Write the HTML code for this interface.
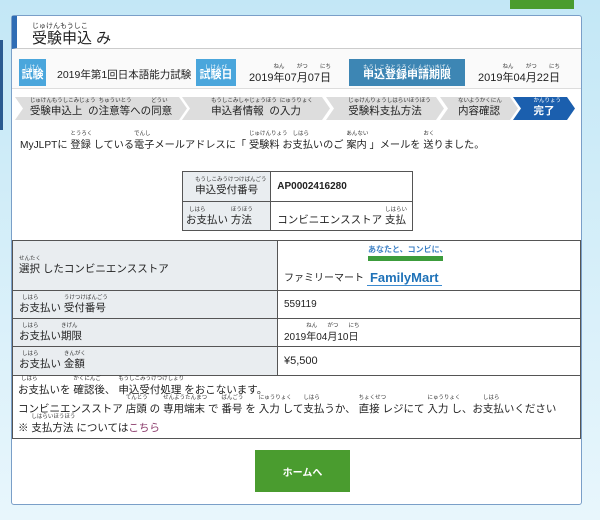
<!DOCTYPE html>
<html><head><meta charset="utf-8"><style>
*{margin:0;padding:0;box-sizing:border-box}
body{width:600px;height:520px;overflow:hidden;background:linear-gradient(#c3e7f6,#e8f6fc);font-family:"Liberation Sans","Noto Sans CJK JP",sans-serif;color:#222;position:relative}
.a{position:absolute;white-space:nowrap}
.r{position:relative;display:inline-block}
.r i{position:absolute;bottom:88%;left:0;font-size:5.5px;font-style:normal;white-space:nowrap;line-height:1;color:#333;font-weight:normal}
.card{left:11px;top:15px;width:571px;height:490px;background:#fff;border:1px solid #7a9fc8;border-radius:3px}
.lbl{color:#fff;font-size:11px;font-weight:bold;line-height:1;display:flex;align-items:flex-end;justify-content:center;padding-bottom:5px}
.lbl .r i{color:#fff;left:50%;transform:translateX(-50%)}
table{border-collapse:collapse;position:absolute;font-size:10px}
td{border:1.5px solid #555;padding:0 6px;vertical-align:middle;white-space:nowrap}
td.g{background:#e9edf0}
.step{position:absolute;top:97px;height:23px;background:#ddd;font-size:10.5px;display:flex;align-items:flex-end;justify-content:center;padding-bottom:2px;white-space:nowrap;clip-path:polygon(0 0,calc(100% - 8px) 0,100% 50%,calc(100% - 8px) 100%,0 100%,8px 50%)}
</style></head><body>
<div class="a" style="left:0;top:40px;width:3px;height:90px;background:#2a5a90"></div>
<div class="a" style="left:510px;top:0;width:64px;height:9px;background:#4a9c2f"></div>
<div class="a card"></div>
<div class="a" style="left:12px;top:16px;width:569px;height:33px;border-left:5px solid #2f6db5;border-bottom:1px solid #ccc"></div>
<div class="a" style="left:32px;top:27px;font-size:15px"><span class="r">受験申込<i style="font-size:7px">じゅけんもうしこ</i></span> み</div>
<div class="a" style="left:12px;top:49px;width:569px;height:40px;background:#fafafa;border-bottom:1px solid #ddd"></div>
<div class="a lbl" style="left:19px;top:59px;width:27px;height:27px;background:#4aa6dc"><span class="r">試験<i>しけん</i></span></div>
<div class="a" style="left:57px;top:67px;font-size:10.5px">2019年第1回日本語能力試験</div>
<div class="a lbl" style="left:196px;top:59px;width:40px;height:27px;background:#4aa6dc"><span class="r">試験日<i>しけんび</i></span></div>
<div class="a" style="left:249px;top:69px;font-size:11px">2019<span class="r">年<i>ねん</i></span>07<span class="r">月<i>がつ</i></span>07<span class="r">日<i>にち</i></span></div>
<div class="a lbl" style="left:349px;top:59px;width:116px;height:27px;background:#3d86b4"><span class="r">申込登録申請期限<i>もうしこみとうろくしんせいきげん</i></span></div>
<div class="a" style="left:478px;top:69px;font-size:11px">2019<span class="r">年<i>ねん</i></span>04<span class="r">月<i>がつ</i></span>22<span class="r">日<i>にち</i></span></div>
<div class="step" style="left:15px;width:172px"><span class="r">受験申込上<i>じゅけんもうしこみじょう</i></span>&nbsp;&nbsp;の <span class="r">注意等<i>ちゅういとう</i></span> への<span class="r">同意<i>どうい</i></span></div>
<div class="step" style="left:182px;width:148px"><span class="r">申込者情報<i>もうしこみしゃじょうほう</i></span>&nbsp;&nbsp;の <span class="r">入力<i>にゅうりょく</i></span></div>
<div class="step" style="left:326px;width:118px"><span class="r">受験料支払方法<i>じゅけんりょうしはらいほうほう</i></span></div>
<div class="step" style="left:440px;width:78px"><span class="r">内容確認<i>ないようかくにん</i></span></div>
<div class="step" style="left:513px;width:62px;background:#1b5fae;color:#fff;font-weight:bold"><span class="r">完了<i style="color:#fff">かんりょう</i></span></div>
<div class="a" style="left:20px;top:136px;font-size:10.2px">MyJLPTに <span class="r">登録<i>とうろく</i></span> している<span class="r">電子<i>でんし</i></span>メールアドレスに「 <span class="r">受験料<i>じゅけんりょう</i></span> お<span class="r">支払<i>しはら</i></span>いのご <span class="r">案内<i>あんない</i></span> 」メールを <span class="r">送<i>おく</i></span>りました。</div>
<table style="left:182px;top:171px;width:231px">
<tr style="height:30px"><td class="g" style="width:95px;text-align:center;font-size:10.5px;padding:6px 3px 0"><span class="r">申込受付番号<i>もうしこみうけつけばんごう</i></span></td><td style="font-weight:bold">AP0002416280</td></tr>
<tr style="height:29px"><td class="g" style="font-size:10.5px;padding:6px 3px 0"><span class="r">お支払い<i>&nbsp;&nbsp;しはら</i></span> <span class="r">方法<i>ほうほう</i></span></td><td style="font-size:10.5px;padding-top:6px">コンビニエンスストア <span class="r">支払<i>しはらい</i></span></td></tr>
</table>
<table style="left:12px;top:240px;width:569px">
<tr style="height:50px"><td class="g" style="width:265px;font-size:10.5px;padding-top:6px"><span class="r">選択<i>せんたく</i></span> したコンビニエンスストア</td><td style="font-size:10px;position:relative;padding-top:22px">ファミリーマート <span style="display:inline-block;width:75px;border-bottom:1.5px solid #3b8ad0;color:#1f72b8;font-weight:bold;font-size:13px;text-align:center;position:relative;top:1px">FamilyMart</span><div style="position:absolute;left:90px;top:3px;font-size:8px;color:#3b7fc4;font-weight:bold">あなたと、コンビに、</div><div style="position:absolute;left:90px;top:15px;width:75px;height:5px;background:#3c9c3c"></div></td></tr>
<tr style="height:28px"><td class="g" style="font-size:10.5px;padding-top:5px"><span class="r">お支払い<i>&nbsp;&nbsp;しはら</i></span> <span class="r">受付番号<i>うけつけばんごう</i></span></td><td>559119</td></tr>
<tr style="height:28px"><td class="g" style="font-size:10.5px;padding-top:5px"><span class="r">お支払い<i>&nbsp;&nbsp;しはら</i></span><span class="r">期限<i>きげん</i></span></td><td style="padding-top:5px">2019<span class="r">年<i>ねん</i></span>04<span class="r">月<i>がつ</i></span>10<span class="r">日<i>にち</i></span></td></tr>
<tr style="height:29px"><td class="g" style="font-size:10.5px;padding-top:5px"><span class="r">お支払い<i>&nbsp;&nbsp;しはら</i></span> <span class="r">金額<i>きんがく</i></span></td><td style="font-size:11px">¥5,500</td></tr>
<tr style="height:63px"><td colspan="2" style="font-size:10.5px;line-height:19px;padding:4px 5px 0"><span class="r">お支払<i>&nbsp;&nbsp;しはら</i></span>いを <span class="r">確認後<i>かくにんご</i></span>、 <span class="r">申込受付処理<i>もうしこみうけつけしょり</i></span> をおこないます。<br>コンビニエンスストア <span class="r">店頭<i>てんとう</i></span> の <span class="r">専用端末<i>せんようたんまつ</i></span> で <span class="r">番号<i>ばんごう</i></span> を <span class="r">入力<i>にゅうりょく</i></span> して<span class="r">支払<i>しはら</i></span>うか、 <span class="r">直接<i>ちょくせつ</i></span> レジにて <span class="r">入力<i>にゅうりょく</i></span> し、お<span class="r">支払<i>しはら</i></span>いください<br>※ <span class="r">支払方法<i>しはらいほうほう</i></span> については<span style="color:#8a3a6a">こちら</span></td></tr>
</table>
<div class="a" style="left:255px;top:450px;width:95px;height:42px;background:#4a9c2f;color:#fff;font-size:10px;font-weight:bold;display:flex;align-items:center;justify-content:center">ホームへ</div>
</body></html>
